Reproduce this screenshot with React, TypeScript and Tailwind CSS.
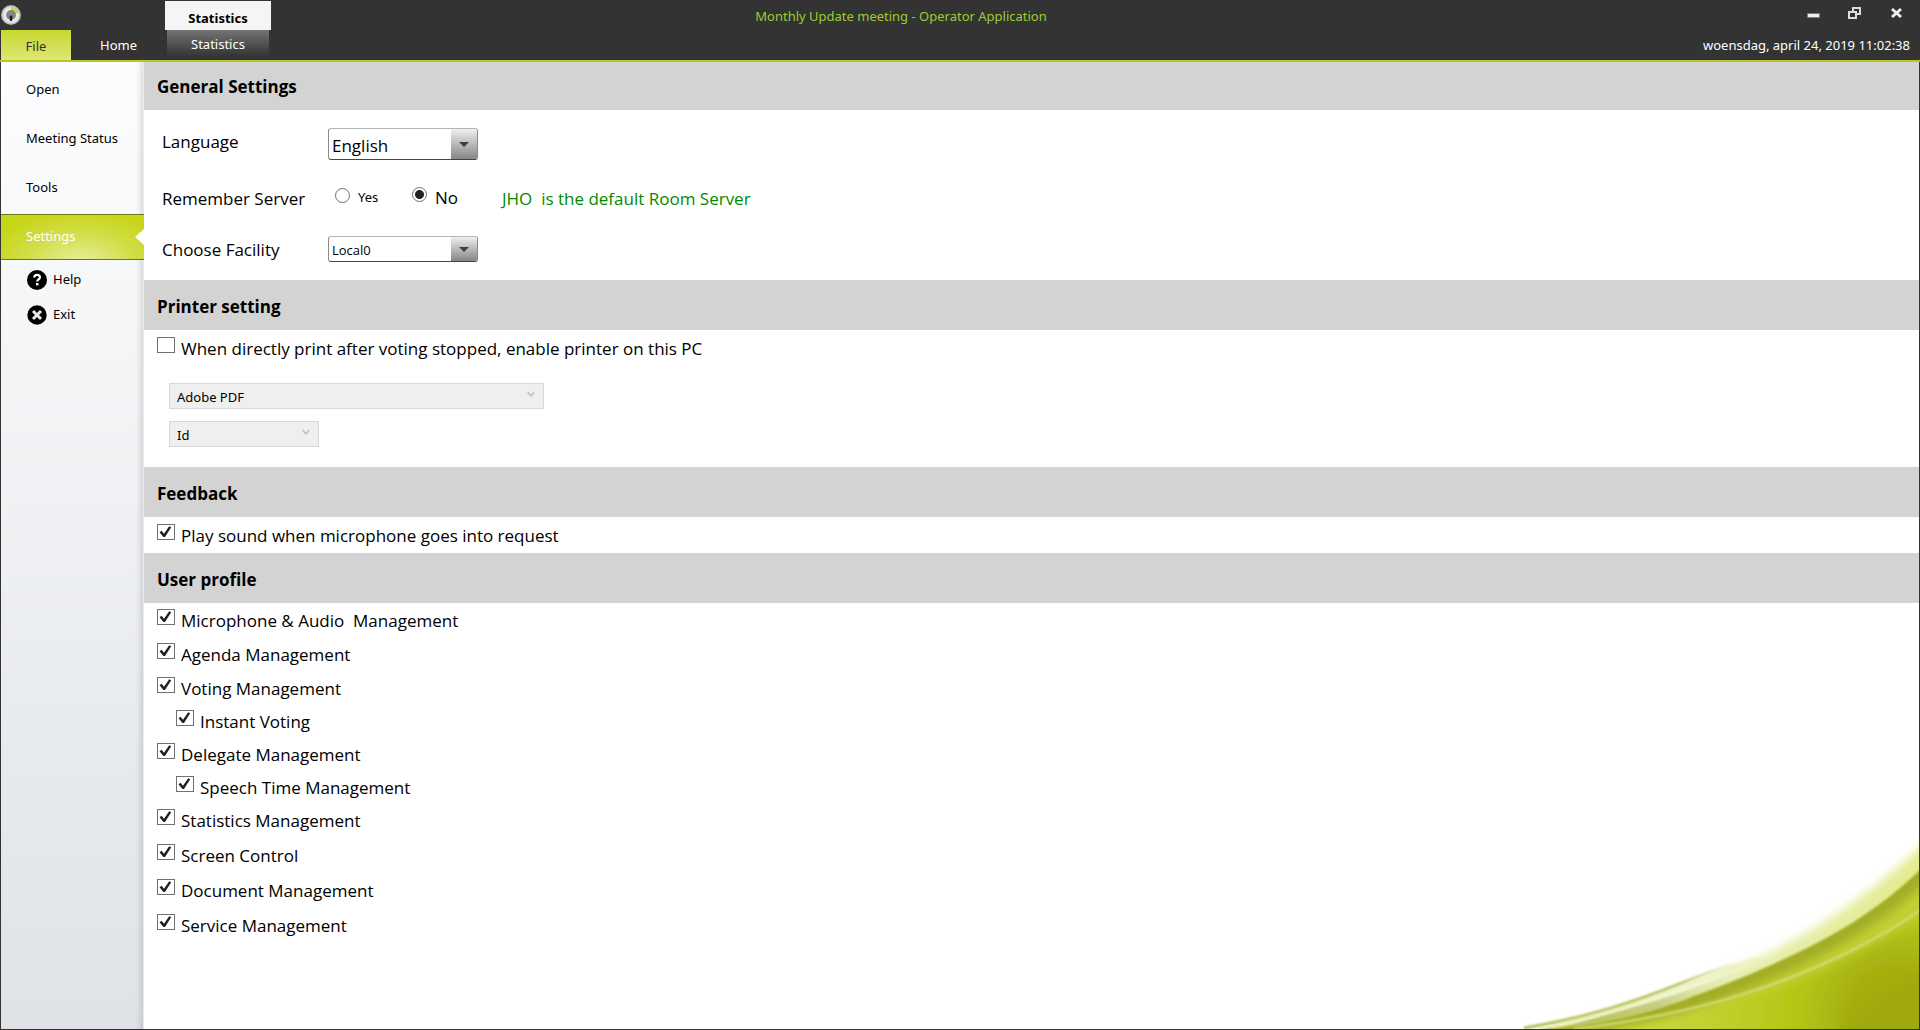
import { FC, ReactNode, useState } from "react";

type Permission = {
  label: string;
  nested?: boolean;
  rowClass: string;
};

const permissions: Permission[] = [
  { label: "Microphone & Audio\u00a0 Management", rowClass: "h-[34px]" },
  { label: "Agenda Management", rowClass: "h-[34px]" },
  { label: "Voting Management", rowClass: "h-[33px]" },
  { label: "Instant Voting", nested: true, rowClass: "h-[33px]" },
  { label: "Delegate Management", rowClass: "h-[33px]" },
  { label: "Speech Time Management", nested: true, rowClass: "h-[33px]" },
  { label: "Statistics Management", rowClass: "h-[35px]" },
  { label: "Screen Control", rowClass: "h-[35px]" },
  { label: "Document Management", rowClass: "h-[35px]" },
  { label: "Service Management", rowClass: "h-[35px]" },
];

const Logo: FC = () => (
  <svg width="22" height="22" viewBox="0 0 22 22" aria-hidden="true">
    <defs>
      <radialGradient id="logo-ring" cx="0.5" cy="0.5" r="0.5">
        <stop offset="0.5" stopColor="#f4f4f4" />
        <stop offset="0.8" stopColor="#dcdcdc" />
        <stop offset="1" stopColor="#9b9b9b" />
      </radialGradient>
    </defs>
    <circle cx="10" cy="11" r="10" fill="url(#logo-ring)" />
    <path d="M10 3a9 9 0 0 1 8 5l-4 2a5 5 0 0 0-4-3z" fill="#c3d84a" />
    <circle cx="10" cy="11" r="5" fill="#858585" />
    <path d="M8.500 13a1.500 1.500 0 0 1 3 0l-.5 4h-2z" fill="#222" />
  </svg>
);

const Swoosh: FC = () => (
  <svg
    className="absolute right-0 bottom-0 pointer-events-none"
    width="440"
    height="230"
    viewBox="0 0 440 230"
    aria-hidden="true"
  >
    <defs>
      <filter id="soft" x="-10%" y="-20%" width="120%" height="140%">
        <feGaussianBlur stdDeviation="5" />
      </filter>
      <filter id="softer" x="-10%" y="-20%" width="120%" height="140%">
        <feGaussianBlur stdDeviation="7" />
      </filter>
      <filter id="fine" x="-10%" y="-10%" width="120%" height="120%">
        <feGaussianBlur stdDeviation="0.8" />
      </filter>
      <linearGradient id="band" x1="0" x2="1" y1="0" y2="0">
        <stop offset="0" stopColor="#dfe69a" stopOpacity="0.8" />
        <stop offset="0.5" stopColor="#e8eeb4" />
        <stop offset="1" stopColor="#e3eb8e" />
      </linearGradient>
      <linearGradient id="line" x1="0" x2="1" y1="0" y2="0">
        <stop offset="0" stopColor="#aab53a" />
        <stop offset="0.7" stopColor="#b5bf55" />
        <stop offset="1" stopColor="#cfd794" stopOpacity="0" />
      </linearGradient>
      <linearGradient id="shade" x1="0" x2="1" y1="0" y2="0">
        <stop offset="0" stopColor="#a9b43a" />
        <stop offset="0.6" stopColor="#b9c268" stopOpacity="0.7" />
        <stop offset="1" stopColor="#dce2a4" stopOpacity="0" />
      </linearGradient>
      <radialGradient
        id="deep"
        gradientUnits="userSpaceOnUse"
        cx="420"
        cy="220"
        r="250"
      >
        <stop offset="0" stopColor="#9fa810" />
        <stop offset="0.2" stopColor="#a4ae11" />
        <stop offset="0.4" stopColor="#b6c414" />
        <stop offset="0.75" stopColor="#c3d030" />
        <stop offset="1" stopColor="#c9d63c" />
      </radialGradient>
      <clipPath id="body">
        <path d="M60 231C125 224 175 214 215 197C275 175 325 153 370 126C398 108 420 92 450 62V240H60Z" />
      </clipPath>
    </defs>
    <path
      d="M40 236C130 218 200 196 262 166C330 138 392 96 450 40V110C390 160 230 220 90 236Z"
      fill="url(#band)"
      filter="url(#soft)"
    />
    <path
      d="M60 231C130 216 190 200 250 176L262 172C250 186 225 196 200 204C160 217 120 224 60 231Z"
      fill="url(#shade)"
      filter="url(#fine)"
    />
    <path
      d="M72 229C130 214 175 199 225 180C245 172 262 166 280 160"
      fill="none"
      stroke="#edf2bf"
      strokeWidth="4"
      filter="url(#fine)"
    />
    <path
      d="M45 229C110 218 155 203 205 183C230 173 250 166 268 161"
      fill="none"
      stroke="url(#line)"
      strokeWidth="2.500"
      filter="url(#fine)"
    />
    <g filter="url(#fine)">
      <g clipPath="url(#body)">
        <rect width="450" height="240" fill="#c4cf33" />
        <path
          d="M40 231C120 222 175 212 215 197C275 175 325 153 370 126C398 108 420 92 450 62"
          fill="none"
          stroke="#a2ad28"
          strokeWidth="26"
          filter="url(#soft)"
        />
        <path
          d="M100 240C170 226 235 212 300 188C350 169 395 148 460 107V250H100Z"
          fill="url(#deep)"
          filter="url(#soft)"
        />
        <path
          d="M350 245C385 210 410 190 460 170V255Z"
          fill="#9fa90f"
          filter="url(#softer)"
        />
        <path
          d="M95 230C170 221 235 207 300 183C350 164 395 143 445 109"
          fill="none"
          stroke="#d6de74"
          strokeWidth="2"
        />
      </g>
    </g>
  </svg>
);

const HelpIcon: FC = () => (
  <svg width="20" height="20" viewBox="0 0 20 20" aria-hidden="true">
    <circle cx="10" cy="10" r="10" fill="#000" />
    <path
      d="M7.200 7.600C7.200 5.700 8.400 4.900 10 4.900s2.900.9 2.900 2.500c0 2-2.700 2.100-2.700 4.200"
      fill="none"
      stroke="#fff"
      strokeWidth="2.200"
    />
    <rect x="9" y="13" width="2.400" height="2.400" fill="#fff" />
  </svg>
);

const ExitIcon: FC = () => (
  <svg width="20" height="20" viewBox="0 0 20 20" aria-hidden="true">
    <circle cx="10" cy="10" r="9.700" fill="#000" />
    <path
      d="M6 6l8 8M14 6l-8 8"
      stroke="#e8e8e8"
      strokeWidth="3"
    />
  </svg>
);

type SectionProps = {
  title: string;
  children: ReactNode;
};

const Section: FC<SectionProps> = ({ title, children }) => (
  <section>
    <h2 className="h-[50px] flex items-center pl-[13px] pt-1 bg-[#d3d3d3] font-bold text-[17px] leading-6">
      {title}
    </h2>
    {children}
  </section>
);

type CheckProps = {
  label: string;
  defaultChecked?: boolean;
};

const Check: FC<CheckProps> = ({ label, defaultChecked = false }) => {
  const [checked, setChecked] = useState(defaultChecked);

  return (
    <label className="inline-flex items-start gap-[6px]">
      <span className="relative w-[18px] h-4">
        <input
          type="checkbox"
          checked={checked}
          onChange={() => setChecked(!checked)}
          className="block appearance-none w-[18px] h-4 border border-[#707070] bg-white"
        />
        {checked && (
          <svg
            className="absolute inset-0 pointer-events-none"
            width="18"
            height="16"
            viewBox="0 0 18 16"
            aria-hidden="true"
          >
            <path
              d="M2.500 8.200L4.600 6.800L7 9.800L12.200 2.300L14.200 3.200L8 13H6.400Z"
              fill="#212121"
            />
          </svg>
        )}
      </span>
      <span className="text-[17px] leading-6">{label}</span>
    </label>
  );
};

type ComboProps = {
  id: string;
  value: string;
  className: string;
};

const Combo: FC<ComboProps> = ({ id, value, className }) => (
  <div className="relative w-[150px]">
    <select
      id={id}
      className={`block appearance-none w-full pl-[3px] rounded-[3px] border border-t-[#b4b4b4] border-x-[#8a8a8a] border-b-[#444] bg-white ${className}`}
    >
      <option>{value}</option>
    </select>
    <span className="absolute top-px right-px bottom-px w-[26px] rounded-r-[2px] flex items-center justify-center bg-linear-to-b from-[#f0f0f0] to-[#868686] pointer-events-none">
      <svg width="10" height="5" viewBox="0 0 10 5" aria-hidden="true">
        <path d="M0 0H10L5 5Z" fill="#404040" />
      </svg>
    </span>
  </div>
);

type PrinterSelectProps = {
  label: string;
  value: string;
  className: string;
};

const PrinterSelect: FC<PrinterSelectProps> = ({ label, value, className }) => (
  <div className={`relative ${className}`}>
    <select
      disabled
      aria-label={label}
      className="block appearance-none w-full h-[26px] pl-[7px] pt-px border border-[#d9d9d9] bg-[#efefef] font-['Noto_Sans',sans-serif] text-[13px] leading-5 text-black opacity-100"
    >
      <option>{value}</option>
    </select>
    <svg
      className="absolute right-[9px] top-2 pointer-events-none"
      width="8"
      height="7"
      viewBox="0 0 8 7"
      aria-hidden="true"
    >
      <path d="M.7 1.200L4 4.800L7.300 1.200" fill="none" stroke="#bfbfbf" strokeWidth="1.700" />
    </svg>
  </div>
);

const radioClass =
  "appearance-none w-[15px] h-[15px] mt-px rounded-full border border-[#707070] bg-white checked:bg-[radial-gradient(circle,#212121_4px,#fff_5px)]";

const Header: FC = () => (
  <header className="bg-[#333] border-b-2 border-[#b9c62a] font-['Noto_Sans',sans-serif] text-[13px] leading-5 text-white">
    <div className="flex h-[30px]">
      <div className="flex justify-between w-[271px] pl-px">
        <span className="pt-1">
          <Logo />
        </span>
        <div className="flex items-center justify-center w-[106px] mt-px pt-1 bg-[#f5f5f5] font-bold text-black">
          Statistics
        </div>
      </div>
      <h1 className="flex-1 pt-[6px] text-center text-[#9acd32]">
        Monthly Update meeting - Operator Application
      </h1>
      <div className="flex items-start justify-end gap-7 w-[389px] pt-[6px] pr-4">
        <button aria-label="Minimize">
          <svg width="13" height="14" viewBox="0 0 13 14">
            <rect x="0.500" y="7.500" width="12" height="4" fill="#eee" stroke="#777a88" />
          </svg>
        </button>
        <button aria-label="Restore">
          <svg width="15" height="14" viewBox="0 0 15 14">
            <g fill="#333" stroke="#dcdce2" strokeWidth="2">
              <rect x="5" y="2" width="7" height="6" />
              <rect x="1" y="6" width="7" height="6" />
            </g>
          </svg>
        </button>
        <button aria-label="Close">
          <svg width="13" height="14" viewBox="0 0 13 14">
            <path d="M1 3L10 11M10 3L1 11" stroke="#eee" strokeWidth="3" />
          </svg>
        </button>
      </div>
    </div>
    <div className="flex h-[30px] pl-px">
      <button className="w-[70px] pt-[2px] bg-linear-to-b from-[#c9d82a] to-[#dde670] text-[#333]">
        File
      </button>
      <button className="w-[95px]">Home</button>
      <button className="w-[102px] ml-px h-[27px] bg-linear-to-b from-[#747474] to-[#333]">
        Statistics
      </button>
      <time className="ml-auto pr-[10px] pt-[5px]">
        woensdag, april 24, 2019 11:02:38
      </time>
    </div>
  </header>
);

const Sidebar: FC = () => (
  <nav className="flex flex-col w-[143px] shrink-0 pt-[3px] border-r border-[#ececee] bg-linear-to-b from-[#fdfdfe] to-[#dfe3e7] shadow-[inset_-7px_0_5px_-4px_rgba(0,0,0,0.12)] font-['Noto_Sans',sans-serif] text-[13px]">
    {["Open", "Meeting Status", "Tools"].map((item) => (
      <a key={item} href="#" className="flex items-center h-[49px] pl-[25px]">
        {item}
      </a>
    ))}
    <a
      href="#"
      className="relative flex items-center h-[46px] mt-[2px] -mr-px pl-[25px] border-y border-[#6b7a10] text-white bg-[radial-gradient(ellipse_65%_120%_at_55%_110%,#e8efa0_0%,#d2dd45_60%,#c6d61a_100%)]"
    >
      Settings
      <svg
        className="absolute right-0 top-[14px]"
        width="9"
        height="16"
        viewBox="0 0 9 16"
        aria-hidden="true"
      >
        <path d="M9 0V16L0 8Z" fill="#fff" />
      </svg>
    </a>
    <a href="#" className="flex items-center gap-[6px] h-[35px] pl-[26px] mt-[2px]">
      <HelpIcon />
      Help
    </a>
    <a href="#" className="flex items-center gap-[6px] h-[35px] pl-[26px]">
      <ExitIcon />
      Exit
    </a>
  </nav>
);

const App: FC = () => {
  return (
    <div className="flex flex-col min-h-screen border-b border-[#333] font-['Open_Sans','Noto_Sans',sans-serif] text-black">
      <Header />
      <div className="flex flex-1 border-x border-[#333]">
        <Sidebar />
        <main className="relative flex-1 bg-white overflow-hidden">
          <Swoosh />
          <div className="relative -mt-[2px]">
            <Section title="General Settings">
              <div className="h-[170px] pl-[18px] pt-[18px] text-[17px] leading-6">
                <div className="flex items-start h-[58px]">
                  <label htmlFor="language" className="w-[166px] pt-[2px]">
                    Language
                  </label>
                  <Combo id="language" value="English" className="h-8 text-[17px] pt-[3px]" />
                </div>
                <div className="flex items-start h-[50px]">
                  <span className="w-[166px] pt-px">Remember Server</span>
                  <div className="flex items-start w-[174px] pl-[7px]">
                    <label className="flex items-start gap-2 w-[77px] pt-px font-['Noto_Sans',sans-serif] text-[13px] leading-5">
                      <input type="radio" name="remember" className={radioClass} />
                      Yes
                    </label>
                    <label className="flex items-start gap-2">
                      <input
                        type="radio"
                        name="remember"
                        defaultChecked
                        className={radioClass}
                      />
                      No
                    </label>
                  </div>
                  <span className="pt-px whitespace-pre text-[#008a00]">
                    {"JHO  is the default Room Server"}
                  </span>
                </div>
                <div className="flex items-start">
                  <label htmlFor="facility" className="w-[166px] pt-[2px]">
                    Choose Facility
                  </label>
                  <Combo id="facility" value="Local0" className="h-[26px] pt-px text-[13px]" />
                </div>
              </div>
            </Section>
            <Section title="Printer setting">
              <div className="h-[137px] pl-[13px] pt-[5px]">
                <Check label="When directly print after voting stopped, enable printer on this PC" />
                <div className="flex flex-col gap-3 pl-3 pt-[22px]">
                  <PrinterSelect label="Printer" value="Adobe PDF" className="w-[375px]" />
                  <PrinterSelect label="Sort order" value="Id" className="w-[150px]" />
                </div>
              </div>
            </Section>
            <Section title="Feedback">
              <div className="h-9 pl-[13px] pt-[5px]">
                <Check label="Play sound when microphone goes into request" defaultChecked />
              </div>
            </Section>
            <Section title="User profile">
              <ul className="pl-[13px] pt-1">
                {permissions.map(({ label, nested, rowClass }) => (
                  <li key={label} className={`${rowClass} ${nested ? "pl-[19px]" : ""}`}>
                    <Check label={label} defaultChecked />
                  </li>
                ))}
              </ul>
            </Section>
          </div>
        </main>
      </div>
    </div>
  );
};

export default App;
